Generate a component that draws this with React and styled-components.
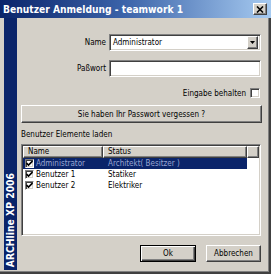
import React from 'react';
import styled, { createGlobalStyle } from 'styled-components';

const FONT = `"DejaVu Sans Condensed", "DejaVu Sans", "Liberation Sans", sans-serif`;

const Global = createGlobalStyle`
  html, body { margin: 0; padding: 0; background: #d4d0c8; }
  body { font-family: ${FONT}; font-size: 8px; color: #000; }
  * { box-sizing: border-box; }
`;

const Window = styled.div`
  width: 271px;
  height: 274px;
  background: #d4d0c8;
  display: flex;
  flex-direction: column;
  overflow: hidden;
`;

const TitleBar = styled.div`
  height: 18px;
  flex: none;
  display: flex;
  align-items: center;
  justify-content: space-between;
  padding: 0 4px 0 3px;
  background: linear-gradient(to right, #0a246a 0%, #3a62a8 45%, #a6caf0 100%);
`;

const TitleText = styled.span`
  color: #fff;
  font-weight: bold;
  font-size: 10.2px;
  white-space: nowrap;
`;

const raised = `
  border: 1px solid;
  border-color: #fff #404040 #404040 #fff;
  box-shadow: inset -1px -1px 0 #808080, inset 1px 1px 0 #d4d0c8;
`;

const sunken = `
  border: 1px solid;
  border-color: #808080 #fff #fff #808080;
  box-shadow: inset 1px 1px 0 #404040, inset -1px -1px 0 #d4d0c8;
`;

const CloseButton = styled.div`
  width: 14px;
  height: 12px;
  background: #d4d0c8;
  ${raised}
  display: flex;
  align-items: center;
  justify-content: center;
`;

const Body = styled.div`
  flex: 1;
  display: flex;
  border-right: 2px solid #404040;
  border-bottom: 2px solid #404040;
  box-shadow: inset -1px -1px 0 #808080;
  padding-bottom: 2px;
`;

const SideBar = styled.div`
  width: 13px;
  margin-left: 4px;
  background: #0a246a;
  display: flex;
  align-items: flex-end;
  justify-content: center;
  padding-bottom: 3px;
`;

const SideText = styled.span`
  writing-mode: vertical-rl;
  transform: rotate(180deg);
  color: #fff;
  font-weight: bold;
  font-size: 10.3px;
  white-space: nowrap;
  line-height: 13px;
`;

const Content = styled.div`
  flex: 1;
  display: flex;
  flex-direction: column;
  padding: 16px 8px 0 4px;
`;

const FieldRow = styled.div`
  display: grid;
  grid-template-columns: 1fr 152px;
  column-gap: 3px;
  align-items: center;
  margin-top: ${p => p.$mt || 0}px;
`;

const Label = styled.label`
  text-align: right;
  white-space: nowrap;
`;

const Field = styled.div`
  height: 17px;
  background: #fff;
  ${sunken}
  display: flex;
  align-items: center;
  padding: 0 2px 0 3px;
`;

const FieldText = styled.span`
  flex: 1;
  white-space: nowrap;
`;

const DropButton = styled.div`
  width: 11px;
  height: 13px;
  background: #d4d0c8;
  ${raised}
  display: flex;
  align-items: center;
  justify-content: center;
`;

const CheckRow = styled.div`
  display: flex;
  justify-content: flex-end;
  align-items: center;
  gap: 4px;
  margin-top: 11px;
  padding-right: 1px;
`;

const Box = styled.div`
  width: ${p => p.$size}px;
  height: ${p => p.$size}px;
  flex: none;
  background: #fff;
  ${sunken}
  display: flex;
  align-items: center;
  justify-content: center;
`;

const Button = styled.div`
  height: ${p => p.$h || 17}px;
  width: ${p => p.$w ? p.$w + 'px' : 'auto'};
  background: #d4d0c8;
  ${raised}
  ${p => p.$default ? `
    border-color: #000;
    box-shadow: inset 1px 1px 0 #fff, inset -1px -1px 0 #404040, inset -2px -2px 0 #808080;
  ` : ''}
  display: flex;
  align-items: center;
  justify-content: center;
  white-space: nowrap;
  margin-top: ${p => p.$mt || 0}px;
`;

const WideButton = styled(Button)`
  margin-right: -1px;
`;

const SectionLabel = styled.div`
  margin-top: 6px;
  height: 12px;
  line-height: 12px;
  white-space: nowrap;
`;

const ListView = styled.div`
  margin-top: 3px;
  height: 92px;
  background: #fff;
  ${sunken}
  padding: 1px;
  display: flex;
  flex-direction: column;
`;

const HeaderRow = styled.div`
  display: flex;
  height: 12px;
  flex: none;
`;

const HeaderCell = styled.div`
  width: ${p => p.$w ? p.$w + 'px' : 'auto'};
  flex: ${p => p.$w ? 'none' : 1};
  background: #d4d0c8;
  ${raised}
  padding-left: 4px;
  line-height: 10px;
  white-space: nowrap;
  overflow: hidden;
`;

const ItemRow = styled.div`
  display: flex;
  width: 224px;
  height: 11px;
  align-items: center;
  background: ${p => p.$selected ? '#0a246a' : 'transparent'};
  color: ${p => p.$selected ? '#9aa6d2' : '#000'};
`;

const NameCell = styled.div`
  width: 80px;
  display: flex;
  align-items: center;
  gap: 2px;
  padding-left: 2px;
  white-space: nowrap;
`;

const StatusCell = styled.div`
  flex: 1;
  padding-left: 5px;
  white-space: nowrap;
`;

const ButtonBar = styled.div`
  display: flex;
  justify-content: flex-end;
  gap: 10px;
  margin-top: 9px;
`;

const Check = () => (
  <svg width="7" height="7" viewBox="0 0 7 7">
    <path d="M0.5 3 L2.5 5 L6.5 1" stroke="#000" strokeWidth="1.6" fill="none" />
  </svg>
);

const users = [
  { name: 'Administrator', status: 'Architekt( Besitzer )', selected: true },
  { name: 'Benutzer 1', status: 'Statiker' },
  { name: 'Benutzer 2', status: 'Elektriker' },
];

export default function App() {
  return (
    <>
      <Global />
      <Window>
        <TitleBar>
          <TitleText>Benutzer Anmeldung - teamwork 1</TitleText>
          <CloseButton>
            <svg width="8" height="7" viewBox="0 0 8 7">
              <path d="M1 0.5 L7 6.5 M7 0.5 L1 6.5" stroke="#000" strokeWidth="1.6" />
            </svg>
          </CloseButton>
        </TitleBar>
        <Body>
          <SideBar>
            <SideText>ARCHline XP 2006</SideText>
          </SideBar>
          <Content>
            <FieldRow>
              <Label>Name</Label>
              <Field>
                <FieldText>Administrator</FieldText>
                <DropButton>
                  <svg width="5" height="3" viewBox="0 0 5 3">
                    <path d="M0 0 H5 L2.5 3 Z" fill="#000" />
                  </svg>
                </DropButton>
              </Field>
            </FieldRow>
            <FieldRow $mt={9}>
              <Label>Paßwort</Label>
              <Field />
            </FieldRow>
            <CheckRow>
              <span>Eingabe behalten</span>
              <Box $size={10} />
            </CheckRow>
            <WideButton $h={18} $mt={7}>Sie haben Ihr Passwort vergessen ?</WideButton>
            <SectionLabel>Benutzer Elemente laden</SectionLabel>
            <ListView>
              <HeaderRow>
                <HeaderCell $w={80}>Name</HeaderCell>
                <HeaderCell $w={144}>Status</HeaderCell>
                <HeaderCell />
              </HeaderRow>
              {users.map(u => (
                <ItemRow key={u.name} $selected={u.selected}>
                  <NameCell>
                    <Box $size={9}><Check /></Box>
                    <span>{u.name}</span>
                  </NameCell>
                  <StatusCell>{u.status}</StatusCell>
                </ItemRow>
              ))}
            </ListView>
            <ButtonBar>
              <Button $w={56} $default>Ok</Button>
              <Button $w={55}>Abbrechen</Button>
            </ButtonBar>
          </Content>
        </Body>
      </Window>
    </>
  );
}
